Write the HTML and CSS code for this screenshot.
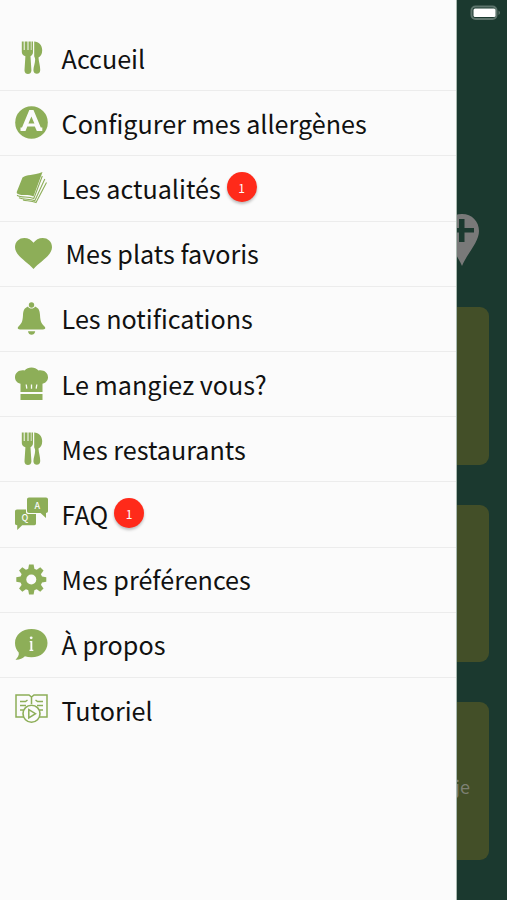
FILE: index.html
```
<!DOCTYPE html>
<html lang="fr">
<head>
    <title>Menu</title>
    <meta charset="utf-8">
    <meta name="viewport" content="width=device-width, initial-scale=1.0">
    <link rel="stylesheet" href="styles.css">
</head>
<body>
    <svg class="sprite">
        <symbol id="cutlery" viewBox="0 0 33 33">
            <path d="M6.800.5h1.900v8.500h1V.5h2.800v8.500h1V.5h2.300v8.500h.7V.5H18v10.500c0 2.200-1 3.400-2.500 4.200l.9 14c.2 5-7.100 5-6.900 0l.9-14C7.800 14.200 6.800 13 6.800 11z"/>
            <path d="M19.200.5c4.700 0 8 3.900 8 8.800 0 4-1.700 6-3.700 7.200.3 4.500 1.800 8.500 1.700 12.700 0 4.700-6.700 4.700-6.800 0 .1-4 2-7.200 1.700-11.200-.1-1.400-.9-1.800-.9-3.200z"/>
        </symbol>
    </svg>

    <div class="screen">
        <main class="home">
            <svg class="pin" viewBox="0 0 36 54"><path fill="#797979" d="M18 1C8 1 1 8.500 1 18c0 11 11 21 17 35 6-14 17-24 17-35C35 8.500 28 1 18 1z"/><path fill="#1b392f" d="M15 6h5.500v9H30v4.500h-9.500v9.500H15v-9.500H6V15h9z"/></svg>
            <div class="card"></div>
            <div class="card"></div>
            <div class="card"><span class="card-text">je</span></div>
        </main>

        <svg class="battery" viewBox="0 0 31 16"><rect x="1.500" y="1.500" width="25" height="12.500" rx="4" fill="#1b392f" stroke="#5e756d" stroke-width="2"/><rect x="3.500" y="3.500" width="22" height="8.500" rx="1.500" fill="#fff"/><path d="M28.500 5.500c2 1 2 3.500 0 4.500z" fill="#5e756d"/></svg>

        <nav class="drawer">
            <ul class="menu">
                <li class="menu-item">
                    <svg class="icon" viewBox="0 0 33 33"><use href="#cutlery"/></svg>
                    <span class="label">Accueil</span>
                </li>
                <li class="menu-item">
                    <svg class="icon" viewBox="0 0 33 33"><circle cx="16.500" cy="16.500" r="16.300"/><path class="cut" fill-rule="evenodd" d="M14.300 4h4.200l7.300 17.500h1.500V25h-5.500l-2-4.500h-7.500L10.500 25h-5v-3.500H7zM16.400 10.500l-3 7h6z"/></svg>
                    <span class="label">Configurer mes allergènes</span>
                </li>
                <li class="menu-item">
                    <svg class="icon" viewBox="0 0 33 33"><path d="M7.500 6.500C12 3 18 5 27.500 1L18.500 25.500C13 23 7.500 25.500 2.500 22.800c-1-.6-.9-1.600-.5-2.500z"/><path class="line" d="M2 24.300c4.500 3 11 .5 16.800 3.200L27.300 5M4 26.700c5 2.300 10 .8 15.800 3L29.800 8M8 29c4 1 8 .6 13 2.500L31.500 11.500"/></svg>
                    <span class="label">Les actualités</span>
                    <span class="badge">1</span>
                </li>
                <li class="menu-item">
                    <svg class="icon icon-wide" viewBox="0 0 38 33"><path d="M19 32.500C12 24.500 0 18.500 0 10 0 4 4.500.5 9.500.5c4 0 7.500 2 9.500 5 2-3 5.500-5 9.500-5C33.500.5 38 4 38 10c0 8.500-12 14.500-19 22.500z"/></svg>
                    <span class="label">Mes plats favoris</span>
                </li>
                <li class="menu-item">
                    <svg class="icon" viewBox="0 0 33 33"><circle cx="16.500" cy="3" r="2.700"/><path d="M13 4.500C9 6 8.200 9 8 13c-.4 7-1.500 8.500-4.300 11.200C1.900 26 2.700 27.500 5 27.500h23c2.300 0 3.100-1.500 1.300-3.300C26.500 21.500 25.400 20 25 13c-.2-4-1-7-5-8.500-1 2.700-6 2.700-7 0zM13 29.200h7.200c-.4 4.700-6.800 4.700-7.200 0z"/></svg>
                    <span class="label">Les notifications</span>
                </li>
                <li class="menu-item">
                    <svg class="icon" viewBox="0 0 33 33"><path d="M5.500 25V16.800C1.500 15.500 0 13 0 10.200 0 5.500 4.500 2.500 9.500 3.500c3.500-4 10.500-4 14 0 5-1 9.500 2 9.500 6.700 0 2.800-1.500 5.300-5.500 6.600V25zM5.500 27h22v6h-22z"/><path class="cut-line" d="M11.200 17.500l.6 4.200M16.500 17.500v4.200M21.800 17.500l-.6 4.200"/></svg>
                    <span class="label">Le mangiez vous?</span>
                </li>
                <li class="menu-item">
                    <svg class="icon" viewBox="0 0 33 33"><use href="#cutlery"/></svg>
                    <span class="label">Mes restaurants</span>
                </li>
                <li class="menu-item">
                    <svg class="icon" viewBox="0 0 33 33"><path d="M2 12.500h9V15c0 1.300.7 2 2 2h8v9.500c0 1-.6 1.700-1.700 1.700H7.200L2.200 33v-4.800C.8 28.200 0 27.500 0 26.500v-12c0-1.200.8-2 2-2z"/><path d="M14 .5h17c1.200 0 2 .8 2 2V14c0 1.200-.8 2-2 2v5L25.500 16H14c-1.200 0-2-.8-2-2V2.500c0-1.200.8-2 2-2z"/><text class="bubble-letter" x="22.300" y="11.800">A</text><text class="bubble-letter" x="10" y="24">Q</text></svg>
                    <span class="label">FAQ</span>
                    <span class="badge">1</span>
                </li>
                <li class="menu-item">
                    <svg class="icon" viewBox="0 0 33 33"><path id="tooth" d="M13 7l1-5.500h4.600l1 5.500v19l-1 5.500H14L13 26z"/><use href="#tooth" transform="rotate(45 16.300 16.500)"/><use href="#tooth" transform="rotate(90 16.300 16.500)"/><use href="#tooth" transform="rotate(135 16.300 16.500)"/><circle cx="16.300" cy="16.500" r="11"/><circle class="cut" cx="16.300" cy="16.500" r="5"/></svg>
                    <span class="label">Mes préférences</span>
                </li>
                <li class="menu-item">
                    <svg class="icon" viewBox="0 0 33 33"><path d="M16.500 1C26 1 32.500 7 32.500 15s-6.500 14.300-16 14.300c-2.500 0-4.700-.3-6.600-1C7.500 30.700 4 32 .5 31.700c2.300-2 3.800-4.500 3.200-7.200C1.300 22 0 18.800 0 15 0 7 7 1 16.500 1z"/><circle class="cut" cx="16.200" cy="9.800" r="1.400"/><path class="cut" d="M14.700 13h2.600v8.800h1V23h-3.800v-1.200h.9v-7.600h-.7z"/></svg>
                    <span class="label">À propos</span>
                </li>
                <li class="menu-item">
                    <svg class="icon" viewBox="0 0 33 33"><path class="line line-book" d="M9 24H1V2h13l2.500 2L19 2h13v22h-8M16.500 4v7M5 8.500h5.500l2-1.500M5 12.500h6M5 17h3.500M28 8.500h-5.500l-2-1.500M28 12.500h-6M28 17h-3.500"/><circle class="play" cx="16.500" cy="20.700" r="8.500"/><path class="line line-book" d="M13.800 16.500v8.400l6.700-4.200z"/></svg>
                    <span class="label">Tutoriel</span>
                </li>
            </ul>
        </nav>
    </div>
</body>
</html>
```
FILE: styles.css
```
body {
    margin: 0;
    font-family: "Noto Sans CJK SC", "Noto Sans", sans-serif;
    color: #111;
}
.sprite {
    display: none;
}
.screen {
    position: relative;
    height: 900px;
    overflow: hidden;
    background-color: #1b392f;
}

/* page behind the drawer */
.home {
    display: flex;
    flex-direction: column;
    gap: 40px;
    padding: 213px 18px 0;
}
.pin {
    width: 36px;
    height: 54px;
    align-self: flex-end;
    margin-right: 9px;
}
.card {
    display: flex;
    align-items: center;
    justify-content: flex-end;
    height: 157.500px;
    border-radius: 9px;
    background-color: #434f28;
}
.card-text {
    padding: 10px 19px 0 0;
    font-size: 18px;
    color: #7d8073;
}
.battery {
    position: absolute;
    top: 5px;
    right: 6px;
    width: 31px;
    height: 16px;
}

/* drawer */
.drawer {
    position: absolute;
    top: 0;
    left: 0;
    box-sizing: border-box;
    width: 457px;
    height: 900px;
    padding-top: 26px;
    background-color: #fbfbfb;
    border-right: 1px solid #a9b9b0;
}
.menu {
    margin: 0;
    padding: 0;
    list-style: none;
}
.menu-item {
    display: flex;
    align-items: center;
    box-sizing: border-box;
    height: 65.200px;
    padding-left: 14.600px;
    border-bottom: 1px solid #ececec;
}
.menu-item:last-child {
    border-bottom: none;
}
.icon {
    flex: none;
    width: 33px;
    height: 33px;
    margin-right: 14px;
    margin-bottom: 1px;
    fill: #8dae58;
}
.icon-wide {
    width: 37px;
}
.label {
    font-size: 25.150px;
    line-height: 40px;
    padding-bottom: 1px;
    white-space: nowrap;
}
.badge {
    width: 30px;
    height: 30px;
    margin-left: 6px;
    margin-bottom: 2px;
    border-radius: 50%;
    background-color: #ff2a1a;
    box-shadow: 0 2px 3px rgba(0,0,0,0.25);
    color: #fff;
    font-size: 12px;
    line-height: 31px;
    text-align: center;
}

/* icon parts */
.cut {
    fill: #fbfbfb;
}
.cut-line {
    fill: none;
    stroke: #fbfbfb;
    stroke-width: 1.3;
}
.line {
    fill: none;
    stroke: #8dae58;
    stroke-width: 1.1;
}
.line-book {
    stroke-width: 1.5;
}
.play {
    fill: #fbfbfb;
    stroke: #8dae58;
    stroke-width: 1.6;
}
.bubble-letter {
    fill: #fbfbfb;
    font-size: 9px;
    font-weight: 500;
    text-anchor: middle;
}
```
